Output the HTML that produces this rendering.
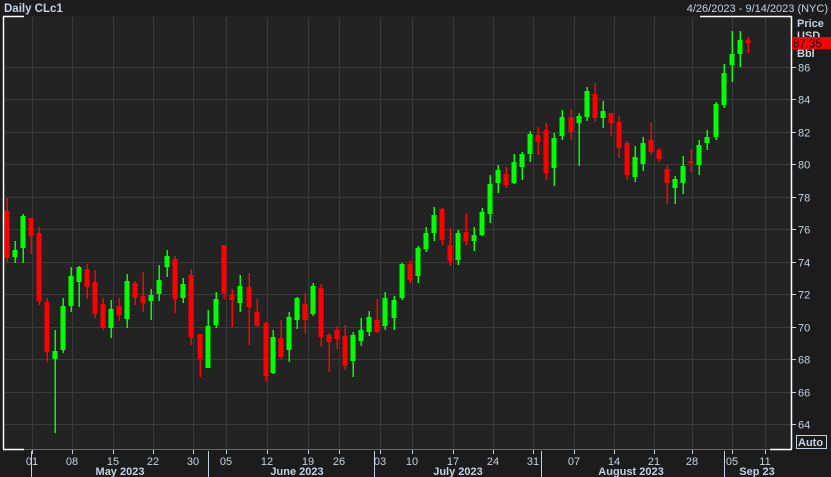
<!DOCTYPE html>
<html><head><meta charset="utf-8"><style>
html,body{margin:0;padding:0;background:#1c1c1c;width:831px;height:477px;overflow:hidden;font-family:"Liberation Sans",sans-serif;}
svg{display:block}
</style></head><body>
<svg id="s" width="831" height="477" xmlns="http://www.w3.org/2000/svg" font-family="Liberation Sans, sans-serif">
<rect x="0" y="0" width="831" height="477" fill="#1c1c1c"/>
<rect x="3" y="16" width="788" height="433" fill="#232323"/>
<text x="4" y="12" font-size="11.5" font-weight="bold" fill="#c4d2e2">Daily CLc1</text>
<text x="828" y="12" font-size="11" fill="#c4d2e2" text-anchor="end">4/26/2023 - 9/14/2023 (NYC)</text>
<g id="grid" stroke="#3a3a3a" stroke-width="1"></g>
<g id="candles"></g>
<g stroke="#ffffff" stroke-width="1.5" fill="none">
<line x1="3.5" y1="16" x2="3.5" y2="449"/>
<line x1="791.5" y1="16" x2="791.5" y2="449"/>
<line x1="3" y1="16.5" x2="24" y2="16.5"/>
<line x1="700" y1="16.5" x2="792" y2="16.5"/>
<line x1="3" y1="449.5" x2="24" y2="449.5"/>
<line x1="770" y1="449.5" x2="792" y2="449.5"/>
</g>
<line x1="24" y1="449.5" x2="770" y2="449.5" stroke="#666" stroke-width="1"/>
<g id="axis" font-size="11" fill="#c4d2e2"></g>
<text x="797" y="27" font-size="11" font-weight="bold" fill="#c4d2e2">Price</text>
<text x="797" y="39" font-size="11" font-weight="bold" fill="#c4d2e2">USD</text>
<rect x="792" y="37" width="39" height="12" fill="#ff0000"/>
<text x="793" y="47.5" font-size="11.5" fill="#000">87.35</text>
<text x="797" y="57" font-size="11" font-weight="bold" fill="#c4d2e2">Bbl</text>
<rect x="796.5" y="435.5" width="30" height="13" fill="none" stroke="#c4d2e2"/>
<text x="798" y="446" font-size="11" font-weight="bold" fill="#c4d2e2">Auto</text>
</svg>
<script>
var NS="http://www.w3.org/2000/svg";
function el(p,t,a,txt){var e=document.createElementNS(NS,t);for(var k in a)e.setAttribute(k,a[k]);if(txt!=null)e.textContent=txt;p.appendChild(e);return e;}
var g=document.getElementById('grid'),ax=document.getElementById('axis'),cg=document.getElementById('candles');
function py(p){return 67+(86-p)*16.23;}
for(var p=64;p<=86;p+=2){var y=Math.round(py(p))+0.5;el(g,'line',{x1:4,y1:y,x2:791,y2:y});
el(ax,'line',{x1:792,y1:y,x2:796,y2:y,stroke:'#c4d2e2'});el(ax,'text',{x:798,y:y+4},String(p));}
var ticks=[[32,'01'],[72,'08'],[113,'15'],[153,'22'],[193,'30'],[226,'05'],[267,'12'],[308,'19'],[339,'26'],[380,'03'],[412,'10'],[453,'17'],[493,'24'],[533,'31'],[574,'07'],[614,'14'],[654,'21'],[692,'28'],[732,'05'],[765,'11']];
ticks.forEach(function(t){var x=t[0]+0.5;el(g,'line',{x1:x,y1:17,x2:x,y2:449});
el(ax,'line',{x1:x,y1:450,x2:x,y2:454,stroke:'#c4d2e2'});el(ax,'text',{x:t[0],y:465,'text-anchor':'middle'},t[1]);});
[31,208,374,541,724].forEach(function(x){el(ax,'line',{x1:x+0.5,y1:451,x2:x+0.5,y2:477,stroke:'#c4d2e2'});});
[[120,'May 2023'],[297,'June 2023'],[458,'July 2023'],[631,'August 2023'],[757,'Sep 23']].forEach(function(m){el(ax,'text',{x:m[0],y:475,'text-anchor':'middle','font-weight':'bold'},m[1]);});
// x, open_y, close_y, high_y, low_y
var C=[[7,211,258,198,262],[15,257,250,241,263],[23,248,216,214,263],[31,218,236,218,254],[39,233,301,227,305],[47,302,352,298,362],[55,359,351,330,433],[63,350,306,298,353],[71,306,276,267,312],[79,282,267,266,307],[87,269,287,264,299],[95,282,314,270,318],[103,304,328,298,330],[111,328,309,300,338],[119,306,315,298,321],[127,319,281,274,328],[135,283,298,281,305],[143,296,303,272,312],[151,301,295,289,320],[159,294,280,265,301],[167,267,256,250,277],[175,259,299,256,313],[183,298,284,278,303],[191,275,337,269,345],
[200,334,359,334,377],[208,368,326,310,368],[216,325,299,292,328],[224,245,293,245,299],[232,295,300,289,327],[240,303,286,275,312],[249,287,307,273,345],[257,312,326,299,327],[266,323,376,322,381],[273,373,337,330,374],[281,338,357,320,359],[289,350,317,312,362],[297,320,298,297,329],[305,304,320,293,333],[313,314,286,283,316],[321,288,337,284,347],[329,335,342,333,372],[337,330,339,326,349],[345,336,366,325,370],[353,361,335,332,377],[361,341,330,318,346],[369,332,317,311,336],[377,320,332,299,333],[385,326,298,292,330],
[394,318,300,296,330],[402,298,264,263,300],[410,264,280,260,283],[418,276,248,246,283],[426,249,233,227,252],[434,233,215,207,241],[442,209,240,208,245],[450,245,261,228,266],[458,260,233,230,265],[466,232,241,213,245],[474,241,235,227,251],[482,235,212,208,236],[490,214,184,175,223],[498,183,170,165,193],[506,174,185,167,188],[514,183,162,154,184],[522,167,154,152,180],[530,154,134,131,162],[538,135,142,127,155],[546,130,173,123,180],[554,168,138,133,186],[562,136,117,110,140],
[571,117,132,109,140],[579,123,116,113,166],[587,117,91,87,121],[595,94,118,83,122],[603,118,111,101,128],[611,113,123,113,136],[619,122,148,116,158],[627,143,175,141,180],[635,177,157,146,182],[643,164,143,137,171],[651,140,152,123,155],[659,150,159,148,162],[667,169,183,165,204],[675,188,179,176,204],[683,183,166,156,194],[691,161,163,149,172],[699,165,145,140,175],[707,143,137,130,150],[716,137,104,102,140],[724,105,73,64,108],[732,65,54,31,82],[740,54,40,31,67],[748,40,43,37,53]];
C.forEach(function(c){var up=c[2]<c[1];var col=up?'#00ff00':'#ff0000';var top=Math.min(c[1],c[2]),bot=Math.max(c[1],c[2]);
el(cg,'rect',{x:c[0]-0.5,y:c[3],width:1.5,height:c[4]-c[3],fill:col});
el(cg,'rect',{x:c[0]-2.5,y:top,width:5,height:Math.max(2,bot-top),fill:col});});
</script>
</body></html>
